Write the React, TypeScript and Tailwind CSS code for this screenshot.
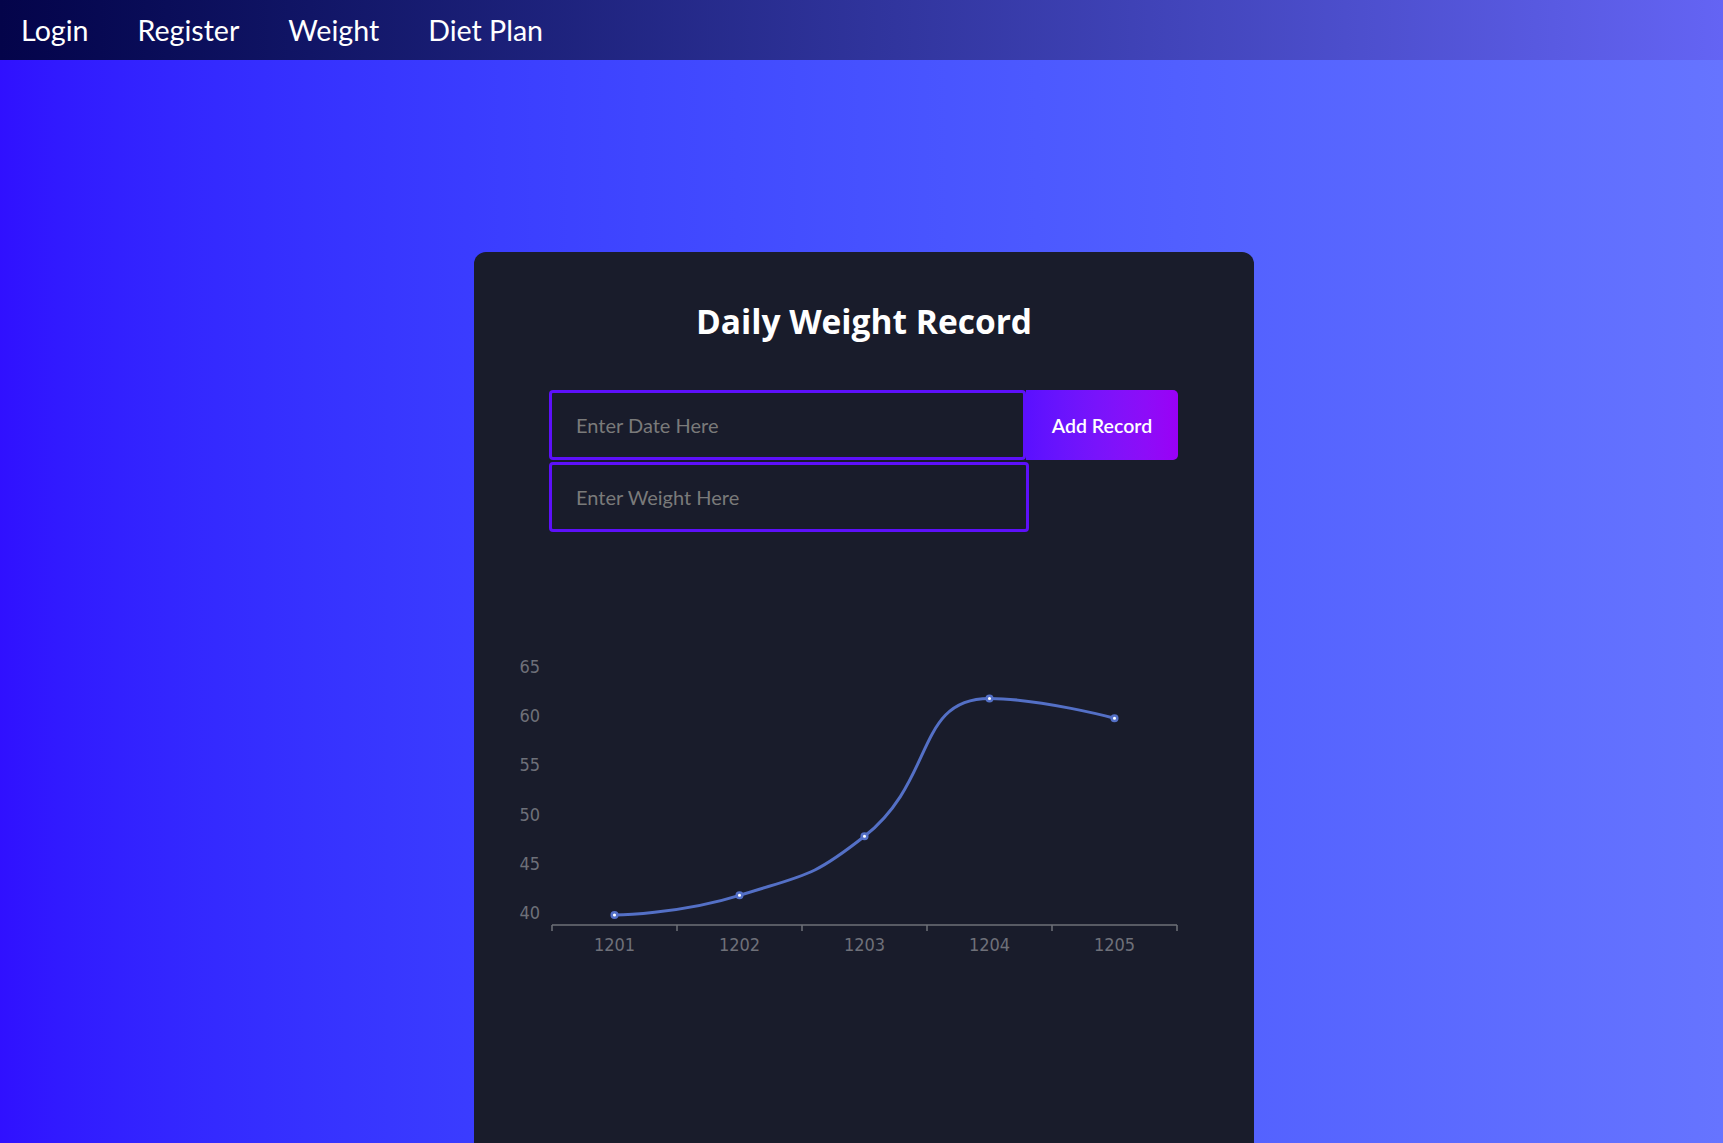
import React from 'react'

const weights = [
    { day: '1201', value: 40 },
    { day: '1202', value: 42 },
    { day: '1203', value: 48 },
    { day: '1204', value: 62 },
    { day: '1205', value: 60 },
]

const navLinks = ['Login', 'Register', 'Weight', 'Diet Plan']

// chart geometry (svg local coords)
const axisLeft = 78
const axisRight = 703
const axisY = 325
const band = (axisRight - axisLeft) / weights.length
const yOf = (v: number) => 315 - (v - 40) * 9.84

const points = weights.map((w, i) => [axisLeft + band * (i + 0.5), yOf(w.value)])

// smoothed line, same clamping as echarts' poly smoothing (smooth = 0.5)
function smoothPath(pts: number[][], smooth = 0.5) {
    const { min, max } = Math
    let d = `M${pts[0][0]},${pts[0][1]}`
    let cpx0 = pts[0][0]
    let cpy0 = pts[0][1]
    for (let i = 1; i < pts.length; i++) {
        const [x, y] = pts[i]
        let cpx1 = x
        let cpy1 = y
        let nextCpx0 = x
        let nextCpy0 = y
        if (i < pts.length - 1) {
            const [prevX, prevY] = pts[i - 1]
            const [nextX, nextY] = pts[i + 1]
            let vx = nextX - prevX
            let vy = nextY - prevY
            const lenPrev = Math.hypot(x - prevX, y - prevY)
            const lenNext = Math.hypot(nextX - x, nextY - y)
            const ratio = lenNext / (lenNext + lenPrev)
            nextCpx0 = x + vx * smooth * ratio
            nextCpy0 = y + vy * smooth * ratio
            nextCpx0 = max(min(nextCpx0, max(nextX, x)), min(nextX, x))
            nextCpy0 = max(min(nextCpy0, max(nextY, y)), min(nextY, y))
            vx = nextCpx0 - x
            vy = nextCpy0 - y
            cpx1 = x - (vx * lenPrev) / lenNext
            cpy1 = y - (vy * lenPrev) / lenNext
            cpx1 = max(min(cpx1, max(prevX, x)), min(prevX, x))
            cpy1 = max(min(cpy1, max(prevY, y)), min(prevY, y))
            vx = x - cpx1
            vy = y - cpy1
            nextCpx0 = x + (vx * lenNext) / lenPrev
            nextCpy0 = y + (vy * lenNext) / lenPrev
        }
        d += ` C${cpx0},${cpy0} ${cpx1},${cpy1} ${x},${y}`
        cpx0 = nextCpx0
        cpy0 = nextCpy0
    }
    return d
}

const WeightChart: React.FC = () => {
    const labelFont = { fontFamily: '"Liberation Sans Narrow", "DejaVu Sans Condensed", sans-serif', fontStretch: 'condensed' as const }
    return (
        <svg width="780" height="400" className="block mt-[68px]">
            {[40, 45, 50, 55, 60, 65].map((v, i) => (
                <text
                    key={v}
                    x="66"
                    y={314 - i * 49.2}
                    textAnchor="end"
                    dominantBaseline="middle"
                    fontSize="18"
                    fill="#6e7079"
                    style={labelFont}
                >
                    {v}
                </text>
            ))}
            <line x1={axisLeft} y1={axisY} x2={axisRight} y2={axisY} stroke="#6e7079" strokeWidth="1.5" />
            {weights.map((_, i) => (
                <line
                    key={i}
                    x1={axisLeft + band * i}
                    y1={axisY}
                    x2={axisLeft + band * i}
                    y2={axisY + 6}
                    stroke="#6e7079"
                    strokeWidth="1.5"
                />
            ))}
            <line x1={axisRight} y1={axisY} x2={axisRight} y2={axisY + 6} stroke="#6e7079" strokeWidth="1.5" />
            {weights.map((w, i) => (
                <text
                    key={w.day}
                    x={points[i][0]}
                    y="351"
                    textAnchor="middle"
                    fontSize="18"
                    fill="#6e7079"
                    style={labelFont}
                >
                    {w.day}
                </text>
            ))}
            <path d={smoothPath(points)} fill="none" stroke="#5470c6" strokeWidth="3" />
            {points.map((p, i) => (
                <circle key={i} cx={p[0]} cy={p[1]} r="2.8" fill="#fff" stroke="#5470c6" strokeWidth="2.5" />
            ))}
        </svg>
    )
}

export default function App() {
    return (
        <div
            className="h-screen overflow-hidden bg-linear-to-r from-[#3010ff] to-[#6674ff]"
            style={{ fontFamily: 'Lato, "Open Sans", sans-serif' }}
        >
            <nav className="h-[60px] flex items-center gap-[49px] pl-[21px] bg-linear-to-r from-[#04044a] to-[#6464f4]">
                {navLinks.map((link) => (
                    <a key={link} href="#" className="text-[28.6px] text-white leading-none">
                        {link}
                    </a>
                ))}
            </nav>

            <main className="flex justify-center pt-[192px] pl-[5px]">
                <div className="w-[780px] min-h-[950px] bg-[#191c2b] rounded-xl pt-[49px]">
                    <div className="px-[75px]">
                        <h1
                            className="text-center text-white text-[33.5px] font-bold leading-[1.2]"
                            style={{ fontFamily: '"Open Sans", Lato, sans-serif' }}
                        >
                            Daily Weight Record
                        </h1>

                        <form className="mt-[49px] flex flex-col gap-[2px]" onSubmit={(e) => e.preventDefault()}>
                            <div className="flex">
                                <input
                                    type="text"
                                    placeholder="Enter Date Here"
                                    className="w-[477px] h-[70px] bg-transparent border-[3px] border-[#5d10fa] rounded-[4px] pl-[24px] text-[20px] text-white placeholder:text-[#7a7a7a] outline-none"
                                />
                                <button
                                    type="submit"
                                    className="w-[152px] h-[70px] bg-linear-to-r from-[#5a10ff] to-[#9a00f6] rounded-r-[5px] text-white text-[19.5px] font-semibold"
                                >
                                    Add Record
                                </button>
                            </div>
                            <input
                                type="text"
                                placeholder="Enter Weight Here"
                                className="w-[480px] h-[70px] bg-transparent border-[3px] border-[#5d10fa] rounded-[4px] pl-[24px] text-[20px] text-white placeholder:text-[#7a7a7a] outline-none"
                            />
                        </form>
                    </div>

                    <WeightChart />
                </div>
            </main>
        </div>
    )
}
